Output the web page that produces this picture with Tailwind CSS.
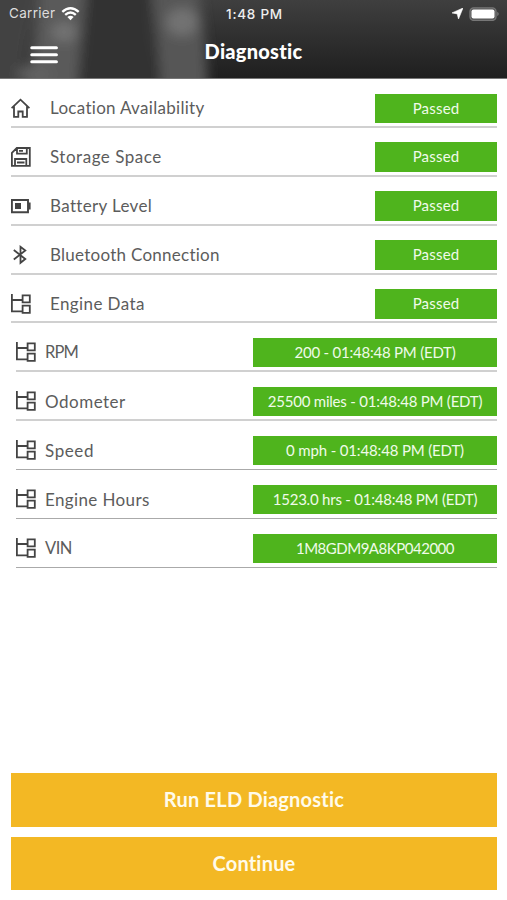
<!DOCTYPE html>
<html lang="en">
<head>
<meta charset="utf-8">
<title>Diagnostic</title>
<script src="https://cdn.jsdelivr.net/npm/@tailwindcss/browser@4"></script>
</head>
<body class="bg-white">
<svg class="hidden">
  <symbol id="tree" viewBox="0 0 20 20"><g fill="none" stroke="#444" stroke-width="1.8"><path d="M.9 0v17.4H11.5M.9 6H11.5"/><path d="M11.6 1.3h7.2v7h-7.2zM11.6 11.7h7.2v7.2h-7.2z"/></g></symbol>
</svg>
<div class="flex h-[900px] w-[507px] flex-col overflow-hidden bg-white font-['Lato','Open_Sans',sans-serif] text-[#5c5c5c]">
  <header class="relative h-[79px] shrink-0 overflow-hidden border-b border-[#777] bg-linear-to-b from-[#3f3f3f] to-[#1f1f1f] text-white">
    <svg class="absolute inset-0" width="507" height="79" viewBox="0 0 507 79">
      <defs><filter id="soft" filterUnits="userSpaceOnUse" x="-40" y="-60" width="320" height="200"><feGaussianBlur stdDeviation="6"/></filter></defs>
      <g filter="url(#soft)">
        <path d="M-40-60H50L30 35L12 140H-40z" fill="#424242"/>
        <path d="M46-60H90L82 40L76 140H16L34 40z" fill="#5a5a5a"/>
        <path d="M90-60H148L152 35L164 140H80z" fill="#323232"/>
        <path d="M148-60H192L204 30L212 140H164L156 35z" fill="#565656"/>
        <ellipse cx="64" cy="32" rx="13" ry="10" fill="#727272"/>
        <ellipse cx="182" cy="22" rx="16" ry="14" fill="#727272"/>
        <ellipse cx="35" cy="74" rx="18" ry="8" fill="#626262"/>
      </g>
    </svg>
    <div class="relative grid h-[27px] grid-cols-3 items-center pl-[9px] pr-[7px] font-['Inter',sans-serif] text-[13.5px]">
      <div class="flex items-center gap-[6px] tracking-[0.3px] text-[#ddd]">Carrier
        <svg width="19" height="14" viewBox="0 0 18 14" fill="none" stroke="#fff" stroke-width="2.4"><path d="M.8 4.8Q9-2.2 17.2 4.8M3.7 7.9Q9 3.3 14.3 7.9"/><path d="M9 13.2L5.9 10Q9 7.6 12.1 10z" fill="#fff" stroke="none"/></svg>
      </div>
      <div class="pt-px text-center font-medium tracking-[0.8px] text-[#eee]"><span class="-mr-1 whitespace-nowrap pr-1 tracking-[0.75px]">1:48 PM</span></div>
      <div class="flex items-center justify-end gap-[6px]">
        <svg width="11" height="11" viewBox="0 0 11 11"><path d="M11 0L6.5 11L5.2 5.9L0 4.9z" fill="#fff" stroke="#fff" stroke-width=".6"/></svg>
        <svg width="31" height="14" viewBox="0 0 31 14"><rect x="1" y=".8" width="26" height="12.6" rx="3.6" fill="#555" stroke="#777" stroke-width="1.3"/><rect x="2.5" y="2.6" width="23" height="9" rx="2" fill="#fff"/><path d="M28.5 4.8Q30.5 7 28.5 9.2z" fill="#999"/></svg>
      </div>
    </div>
    <div class="relative grid h-[51px] grid-cols-3 pl-[30px] pr-[30px]">
      <svg class="mt-[18px]" width="28" height="19" viewBox="0 0 28 19"><path d="M1.8 2.8H26.4M1.8 9.8H26.4M1.8 16.7H26.4" stroke="#fff" stroke-width="3.1" stroke-linecap="round"/></svg>
      <h1 class="pt-[10px] text-center text-[20px] font-black leading-[28px] tracking-[0.25px]">Diagnostic</h1>
    </div>
  </header>

  <main class="pl-[11px] pr-[10px] text-[17px]">
    <div class="flex h-[48.9px] items-start border-b-2 border-[#d0d0d0] pt-[14.5px]">
      <svg class="mt-[4px]" width="20" height="20" viewBox="0 0 20 20" fill="none" stroke="#444" stroke-width="1.8"><path d="M.6 10.1L9.5 1.7L18.4 10.1M3 8.5V18.9H7.3V13.5H11.7V18.9H16V8.5"/></svg>
      <span class="ml-[19px] leading-[28px] tracking-[0.3px]">Location Availability</span>
      <span class="ml-auto h-[29.5px] w-[122px] bg-[#4fb41d] text-center text-[15px] leading-[28px] tracking-[0.2px] text-[#effbe9]">Passed</span>
    </div>
    <div class="flex h-[48.9px] items-start border-b-2 border-[#d0d0d0] pt-[14.5px]">
      <svg class="mt-[5px]" width="20" height="20" viewBox="0 0 20 20" fill="none" stroke="#444" stroke-width="1.8"><path d="M.9 5.8L5.8 1H18.8V18.9H.9zM6 1V6.6H15.8V1M4 19V12H15.3V19M6 15.5H13.5M8 3.8H12"/></svg>
      <span class="ml-[19px] leading-[29px] tracking-[0.52px]">Storage Space</span>
      <span class="ml-auto h-[29.5px] w-[122px] bg-[#4fb41d] text-center text-[15px] leading-[29px] tracking-[0.2px] text-[#effbe9]">Passed</span>
    </div>
    <div class="flex h-[48.9px] items-start border-b-2 border-[#d0d0d0] pt-[14.5px]">
      <svg class="mt-[4.5px]" width="20" height="20" viewBox="0 0 20 20"><path d="M.9 4H17V16.2H.9z" fill="none" stroke="#444" stroke-width="1.9"/><path d="M4 7h6v6H4zM17 6.5h2.6v7H17z" fill="#444"/></svg>
      <span class="ml-[19px] leading-[29px] tracking-[0.35px]">Battery Level</span>
      <span class="ml-auto h-[29.5px] w-[122px] bg-[#4fb41d] text-center text-[15px] leading-[29px] tracking-[0.2px] text-[#effbe9]">Passed</span>
    </div>
    <div class="flex h-[48.9px] items-start border-b-2 border-[#d0d0d0] pt-[14.5px]">
      <svg class="mt-[5px]" width="20" height="20" viewBox="0 0 20 20" fill="none" stroke="#444" stroke-width="1.8"><path d="M2.8 5L14.3 14L9.5 17.8V1.8L14.3 5.5L2.8 14.5"/></svg>
      <span class="ml-[19px] leading-[29px] tracking-[0.26px]">Bluetooth Connection</span>
      <span class="ml-auto h-[29.5px] w-[122px] bg-[#4fb41d] text-center text-[15px] leading-[29px] tracking-[0.2px] text-[#effbe9]">Passed</span>
    </div>
    <div class="flex h-[48.9px] items-start border-b-2 border-[#d0d0d0] pt-[14.5px]">
      <svg class="mt-[4.5px]" width="20" height="20"><use href="#tree"/></svg>
      <span class="ml-[19px] leading-[29px] tracking-[0.4px]">Engine Data</span>
      <span class="ml-auto h-[29.5px] w-[122px] bg-[#4fb41d] text-center text-[15px] leading-[29px] tracking-[0.2px] text-[#effbe9]">Passed</span>
    </div>
    <div class="pl-[4.5px]">
      <div class="flex h-[48.9px] items-start border-b-2 border-[#d0d0d0] pt-[14.5px]">
        <svg class="mt-[4.5px]" width="20" height="20"><use href="#tree"/></svg>
        <span class="ml-[9.5px] text-[16.5px] leading-[28px] tracking-[-0.9px]">RPM</span>
        <span class="ml-auto h-[29.5px] w-[244px] bg-[#4fb41d] text-center text-[15px] leading-[29px] tracking-[-0.22px] text-[#effbe9]">200 - 01:48:48 PM (EDT)</span>
      </div>
      <div class="flex h-[48.9px] items-start border-b-2 border-[#d0d0d0] pt-[14.5px]">
        <svg class="mt-[4.5px]" width="20" height="20"><use href="#tree"/></svg>
        <span class="ml-[9.5px] leading-[29px] tracking-[0.5px]">Odometer</span>
        <span class="ml-auto h-[29.5px] w-[244px] bg-[#4fb41d] text-center text-[15px] leading-[29px] tracking-[-0.22px] text-[#effbe9]">25500 miles - 01:48:48 PM (EDT)</span>
      </div>
      <div class="flex h-[48.9px] items-start border-b border-[#aaa] pt-[14.5px]">
        <svg class="mt-[4.5px]" width="20" height="20"><use href="#tree"/></svg>
        <span class="ml-[9.5px] leading-[29px] tracking-[0.6px]">Speed</span>
        <span class="ml-auto h-[29.5px] w-[244px] bg-[#4fb41d] text-center text-[15px] leading-[29px] tracking-[-0.15px] text-[#effbe9]">0 mph - 01:48:48 PM (EDT)</span>
      </div>
      <div class="flex h-[48.9px] items-start border-b border-[#aaa] pt-[14.5px]">
        <svg class="mt-[4.5px]" width="20" height="20"><use href="#tree"/></svg>
        <span class="ml-[9.5px] leading-[29px] tracking-[0.38px]">Engine Hours</span>
        <span class="ml-auto h-[29.5px] w-[244px] bg-[#4fb41d] text-center text-[15px] leading-[29px] tracking-[-0.22px] text-[#effbe9]">1523.0 hrs - 01:48:48 PM (EDT)</span>
      </div>
      <div class="flex h-[48.9px] items-start border-b border-[#aaa] pt-[14.5px]">
        <svg class="mt-[4.5px]" width="20" height="20"><use href="#tree"/></svg>
        <span class="ml-[9.5px] text-[16.5px] leading-[28px] tracking-[-0.5px]">VIN</span>
        <span class="ml-auto h-[29.5px] w-[244px] bg-[#4fb41d] text-center text-[15px] leading-[28px] tracking-[-0.48px] text-[#effbe9]">1M8GDM9A8KP042000</span>
      </div>
    </div>
  </main>

  <footer class="mt-auto flex flex-col gap-[10px] pb-[9.6px] pl-[11px] pr-[10px] text-[20px] font-bold text-[#fffbea]">
    <button class="h-[53.7px] bg-[#f3b824] pb-[2px] tracking-[0.22px]">Run ELD Diagnostic</button>
    <button class="h-[53.7px] bg-[#f3b824] pb-[2px] tracking-[0.2px]">Continue</button>
  </footer>
</div>
</body>
</html>
